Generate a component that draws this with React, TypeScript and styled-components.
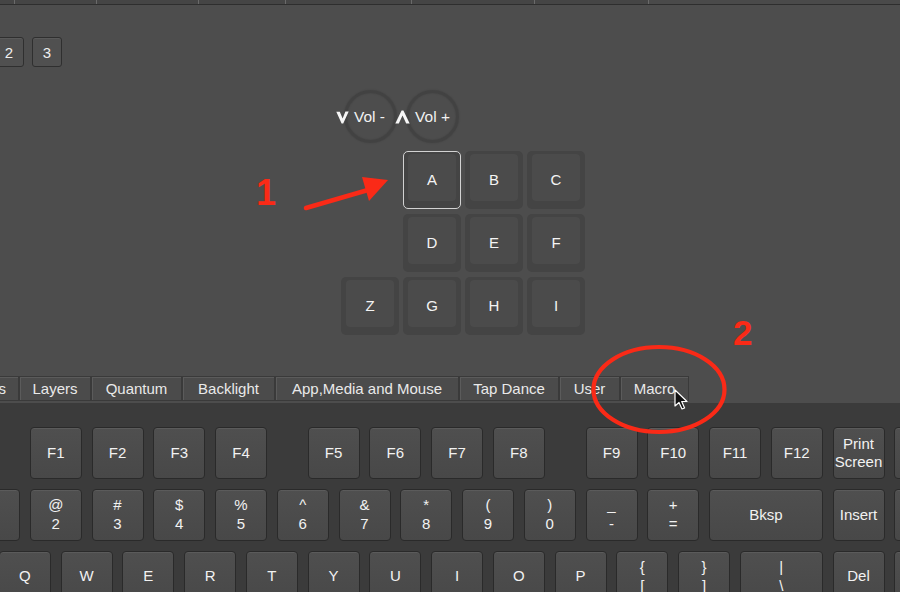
import React from "react";
import styled, { createGlobalStyle } from "styled-components";

const GlobalStyle = createGlobalStyle`
  html, body { margin: 0; padding: 0; background: #4d4d4d; }
  body { font-family: "Liberation Sans", Arial, sans-serif; }
  * { box-sizing: border-box; }
`;

const PITCH = 61.75;
const GAP = 9.75;
const unitWidth = (u: number) => u * PITCH - GAP;

const Screen = styled.div`
  position: relative;
  width: 900px;
  height: 592px;
  overflow: hidden;
  display: flex;
  flex-direction: column;
  background: #4d4d4d;
  color: #ececec;
  font-family: "Liberation Sans", Arial, sans-serif;
`;

const TopStrip = styled.div`
  flex: none;
  height: 5px;
  display: flex;
  background: #4a4a4a;
  border-bottom: 1px solid #2e2e2e;
`;

const TopCell = styled.div<{ $w: number }>`
  width: ${(p) => p.$w}px;
  height: 100%;
  background: #454545;
  border-right: 1px solid #6a6a6a;
`;

const Canvas = styled.div`
  flex: none;
  height: 370px;
  padding-top: 32px;
  display: flex;
  flex-direction: column;
`;

const LayerRow = styled.div`
  display: flex;
  gap: 8px;
  margin-left: -44px;
`;

const LayerButton = styled.div`
  width: 30px;
  height: 30px;
  border: 1px solid #2f2f2f;
  border-radius: 3px;
  background: #505050;
  box-shadow: inset 0 1px 0 rgba(255, 255, 255, 0.06);
  display: flex;
  align-items: center;
  justify-content: center;
  font-size: 15px;
  color: #efefef;
`;

const Pad = styled.div`
  margin-left: 341px;
  margin-top: 23px;
  display: grid;
  grid-template-columns: repeat(4, 58px);
  grid-template-rows: 56px repeat(3, 58px);
  column-gap: 4px;
  row-gap: 5px;
`;

const Knob = styled.div<{ $col: number }>`
  grid-column: ${(p) => p.$col};
  grid-row: 1;
  justify-self: center;
  align-self: start;
  width: 53px;
  height: 53px;
  border-radius: 50%;
  border: 3px solid #424242;
  box-shadow: 0 0 2px rgba(0, 0, 0, 0.15), inset 0 0 2px rgba(0, 0, 0, 0.15);
  display: flex;
  align-items: center;
  justify-content: center;
`;

const KnobLabel = styled.div`
  display: flex;
  align-items: center;
  gap: 5px;
  margin-right: 19px;
  white-space: nowrap;
  font-size: 15.5px;
  color: #f2f2f2;
`;

const PadKey = styled.div<{ $col: number; $row: number; $selected?: boolean }>`
  grid-column: ${(p) => p.$col};
  grid-row: ${(p) => p.$row};
  display: flex;
  padding: ${(p) => (p.$selected ? "2px 4px 7px 4px" : "3px 5px 8px 5px")};
  border-radius: 5px;
  background: #444444;
  border: ${(p) => (p.$selected ? "1.5px solid #d2d2d2" : "none")};
`;

const PadFace = styled.div`
  flex: 1;
  border-radius: 4px;
  background: #4b4b4b;
  display: flex;
  align-items: center;
  justify-content: center;
  padding-top: 3px;
  font-size: 15px;
  color: #f4f4f4;
`;

const TabBar = styled.div`
  flex: none;
  height: 28px;
  padding-top: 1px;
  display: flex;
  align-items: flex-start;
`;

const Tab = styled.div<{ $w: number; $first?: boolean }>`
  flex: none;
  width: ${(p) => p.$w}px;
  margin-left: ${(p) => (p.$first ? 19 - p.$w : 0)}px;
  height: 25px;
  display: flex;
  align-items: center;
  justify-content: ${(p) => (p.$first ? "flex-end" : "center")};
  padding-right: ${(p) => (p.$first ? 12 : 0)}px;
  background: #4b4b4b;
  border: 1px solid #3a3a3a;
  box-shadow: inset 1px 1px 0 #5b5b5b;
  font-size: 15px;
  color: #e9e9e9;
  white-space: nowrap;
`;

const KeyboardArea = styled.div`
  flex: 1;
  background: #3b3b3b;
  padding-top: 24px;
  display: flex;
  flex-direction: column;
  gap: ${GAP}px;
`;

const KeyRow = styled.div`
  flex: none;
  display: flex;
  gap: ${GAP}px;
  margin-left: -93.75px;
`;

const Key = styled.div<{ $u: number; $shift: number }>`
  flex: none;
  width: ${(p) => unitWidth(p.$u)}px;
  height: 52px;
  margin-left: ${(p) => p.$shift}px;
  border: 1px solid #2a2a2a;
  border-radius: 4px;
  background: linear-gradient(#4f4f4f, #484848);
  box-shadow: inset 0 1px 0 rgba(255, 255, 255, 0.07);
  display: flex;
  flex-direction: column;
  align-items: center;
  justify-content: center;
  font-size: 15px;
  line-height: 18.5px;
  color: #f2f2f2;
  text-align: center;
`;

const Callout = styled.div<{ $x: number; $y: number; $size: number }>`
  position: absolute;
  left: ${(p) => p.$x}px;
  top: ${(p) => p.$y}px;
  font-size: ${(p) => p.$size}px;
  line-height: ${(p) => p.$size}px;
  font-weight: 700;
  color: #fa2a17;
  font-family: "Liberation Sans", Arial, sans-serif;
`;

const Overlay = styled.svg`
  position: absolute;
  left: 0;
  top: 0;
  width: 900px;
  height: 592px;
  pointer-events: none;
`;

type KeyDef = { l: string[]; u?: number; s?: number };

/* keys whose legends lie outside the visible window carry no legend */
const fRow: KeyDef[] = [
  { l: [] },
  { l: ["F1"], s: PITCH },
  { l: ["F2"] },
  { l: ["F3"] },
  { l: ["F4"] },
  { l: ["F5"], s: PITCH / 2 },
  { l: ["F6"] },
  { l: ["F7"] },
  { l: ["F8"] },
  { l: ["F9"], s: PITCH / 2 },
  { l: ["F10"] },
  { l: ["F11"] },
  { l: ["F12"] },
  { l: ["Print", "Screen"] },
  { l: [] },
];

const numRow: KeyDef[] = [
  { l: [] },
  { l: [] },
  { l: ["@", "2"] },
  { l: ["#", "3"] },
  { l: ["$", "4"] },
  { l: ["%", "5"] },
  { l: ["^", "6"] },
  { l: ["&", "7"] },
  { l: ["*", "8"] },
  { l: ["(", "9"] },
  { l: [")", "0"] },
  { l: ["_", "-"] },
  { l: ["+", "="] },
  { l: ["Bksp"], u: 2 },
  { l: ["Insert"] },
  { l: [] },
];

const qRow: KeyDef[] = [
  { l: [], u: 1.5 },
  { l: ["Q"] },
  { l: ["W"] },
  { l: ["E"] },
  { l: ["R"] },
  { l: ["T"] },
  { l: ["Y"] },
  { l: ["U"] },
  { l: ["I"] },
  { l: ["O"] },
  { l: ["P"] },
  { l: ["{", "["] },
  { l: ["}", "]"] },
  { l: ["|", "\\"], u: 1.5 },
  { l: ["Del"] },
  { l: [] },
];

const tabs = [
  { t: "s", w: 84 },
  { t: "Layers", w: 72 },
  { t: "Quantum", w: 91 },
  { t: "Backlight", w: 93 },
  { t: "App,Media and Mouse", w: 184 },
  { t: "Tap Dance", w: 100 },
  { t: "User", w: 61 },
  { t: "Macro", w: 69 },
];

const padKeys = [
  { k: "A", c: 2, r: 2, sel: true },
  { k: "B", c: 3, r: 2 },
  { k: "C", c: 4, r: 2 },
  { k: "D", c: 2, r: 3 },
  { k: "E", c: 3, r: 3 },
  { k: "F", c: 4, r: 3 },
  { k: "Z", c: 1, r: 4 },
  { k: "G", c: 2, r: 4 },
  { k: "H", c: 3, r: 4 },
  { k: "I", c: 4, r: 4 },
];

const ChevronDown = () => (
  <svg width="13" height="14" viewBox="0 0 13 14">
    <path d="M0.3 1.8 L3.8 1.8 L6.6 8.6 L9.4 1.4 L12.7 1.4 L7.2 13.6 L5.6 13.6 Z" fill="#f6f6f6" />
  </svg>
);

const ChevronUp = () => (
  <svg width="15" height="14" viewBox="0 0 15 14">
    <path d="M6.6 0.4 L8.4 0.4 L14.7 13.6 L11.2 13.6 L7.5 5.4 L3.8 13.6 L0.3 13.6 Z" fill="#f6f6f6" />
  </svg>
);

const renderRow = (row: KeyDef[]) =>
  row.map((k, i) => (
    <Key key={i} $u={k.u ?? 1} $shift={k.s ?? 0}>
      {k.l.map((line, j) => (
        <span key={j}>{line}</span>
      ))}
    </Key>
  ));

export default function App() {
  return (
    <>
      <GlobalStyle />
      <Screen>
        <TopStrip>
          {[15, 82, 102, 87, 126, 123, 114].map((w, i) => (
            <TopCell key={i} $w={w} />
          ))}
        </TopStrip>

        <Canvas>
          <LayerRow>
            <LayerButton />
            <LayerButton>2</LayerButton>
            <LayerButton>3</LayerButton>
          </LayerRow>
          <Pad>
            <Knob $col={1}>
              <KnobLabel>
                <ChevronDown />
                <span>Vol -</span>
              </KnobLabel>
            </Knob>
            <Knob $col={2}>
              <KnobLabel>
                <ChevronUp />
                <span>Vol +</span>
              </KnobLabel>
            </Knob>
            {padKeys.map((p) => (
              <PadKey key={p.k} $col={p.c} $row={p.r} $selected={p.sel}>
                <PadFace>{p.k}</PadFace>
              </PadKey>
            ))}
          </Pad>
        </Canvas>

        <TabBar>
          {tabs.map((t, i) => (
            <Tab key={t.t} $w={t.w} $first={i === 0}>
              {t.t}
            </Tab>
          ))}
        </TabBar>

        <KeyboardArea>
          <KeyRow>{renderRow(fRow)}</KeyRow>
          <KeyRow>{renderRow(numRow)}</KeyRow>
          <KeyRow>{renderRow(qRow)}</KeyRow>
        </KeyboardArea>

        <Callout $x={256} $y={175} $size={36}>1</Callout>
        <Callout $x={733} $y={315} $size={35}>2</Callout>

        <Overlay viewBox="0 0 900 592">
          <line x1="306" y1="208" x2="368" y2="190" stroke="#fa2a17" strokeWidth="4.5" strokeLinecap="round" />
          <polygon points="388,180 362,177 369,201" fill="#fa2a17" />
          <ellipse cx="659" cy="389.5" rx="65.5" ry="42.5" fill="none" stroke="#fa2a17" strokeWidth="4.2" />
          <path
            d="M675 390 L675 406 L679 402.5 L682 409 L684.6 408 L681.7 401.5 L687 401.5 Z"
            fill="#111"
            stroke="#fff"
            strokeWidth="1.2"
            strokeLinejoin="round"
          />
        </Overlay>
      </Screen>
    </>
  );
}
